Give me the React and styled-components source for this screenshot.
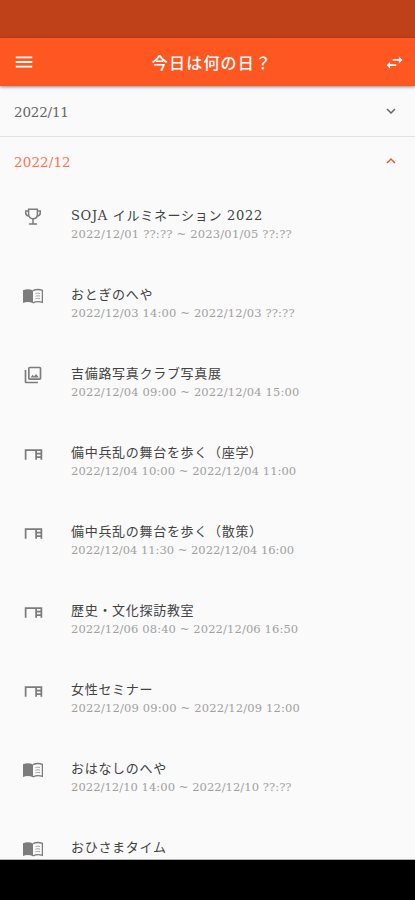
import React from 'react';
import styled, { createGlobalStyle } from 'styled-components';
import {
  MdMenu,
  MdSwapHoriz,
  MdOutlinePhotoLibrary,
  MdOutlineDesk,
  MdExpandMore,
  MdExpandLess,
} from 'react-icons/md';

const TrophyIcon = ({ size }) => (
  <svg
    width={size}
    height={size}
    viewBox="0 0 18 18"
    fill="none"
    stroke="currentColor"
    strokeWidth="1.5"
  >
    <path d="M4.6 1.2h8.8v5.1c0 2.7-1.8 4.5-4.4 4.5S4.6 9 4.6 6.3z" />
    <path d="M4.6 3.1H1.7v1.6c0 1.9 1.1 3.1 3.2 3.3M13.4 3.1h2.9v1.6c0 1.9-1.1 3.1-3.2 3.3" />
    <path d="M9 10.8v4.6M4.9 15.9h8.2" />
  </svg>
);

const BookIcon = ({ size }) => (
  <svg width={size} height={size} viewBox="0 0 20 20" fill="currentColor">
    <path d="M0 4.2C3.2 2.9 7 2.9 10 4.4v12.8c-3-1.5-6.8-1.5-10-.3z" />
    <path
      d="M10 4.7c2.7-1.4 6.3-1.5 9.4-.4v12c-3.1-1-6.7-.8-9.4.5"
      fill="none"
      stroke="currentColor"
      strokeWidth="1.3"
    />
    <path
      d="M12.4 7.7c1.4-.6 3-.6 4.6-.2M12.4 10.3c1.4-.6 3-.6 4.6-.2M12.4 12.9c1.4-.6 3-.6 4.6-.2"
      fill="none"
      stroke="currentColor"
      opacity="0.7"
    />
  </svg>
);

const ICONS = {
  festival: { Icon: TrophyIcon, size: 18 },
  book: { Icon: BookIcon, size: 20 },
  gallery: { Icon: MdOutlinePhotoLibrary, size: 20 },
  lecture: { Icon: MdOutlineDesk, size: 21 },
};

const EVENTS = [
  {
    type: 'festival',
    title: 'SOJA イルミネーション 2022',
    time: '2022/12/01 ??:?? ~ 2023/01/05 ??:??',
    tracking: 0.2,
  },
  {
    type: 'book',
    title: 'おとぎのへや',
    time: '2022/12/03 14:00 ~ 2022/12/03 ??:??',
    tracking: 0.15,
  },
  {
    type: 'gallery',
    title: '吉備路写真クラブ写真展',
    time: '2022/12/04 09:00 ~ 2022/12/04 15:00',
    tracking: 0.15,
  },
  {
    type: 'lecture',
    title: '備中兵乱の舞台を歩く（座学）',
    time: '2022/12/04 10:00 ~ 2022/12/04 11:00',
    tracking: 0.06,
  },
  {
    type: 'lecture',
    title: '備中兵乱の舞台を歩く（散策）',
    time: '2022/12/04 11:30 ~ 2022/12/04 16:00',
    tracking: 0,
  },
  {
    type: 'lecture',
    title: '歴史・文化探訪教室',
    time: '2022/12/06 08:40 ~ 2022/12/06 16:50',
    tracking: 0.12,
  },
  {
    type: 'lecture',
    title: '女性セミナー',
    time: '2022/12/09 09:00 ~ 2022/12/09 12:00',
    tracking: 0.17,
  },
  {
    type: 'book',
    title: 'おはなしのへや',
    time: '2022/12/10 14:00 ~ 2022/12/10 ??:??',
    tracking: 0.06,
  },
  {
    type: 'book',
    title: 'おひさまタイム',
  },
];

const Event = ({ type, title, time, tracking }) => {
  const { Icon, size } = ICONS[type];

  return (
    <EventRow>
      <EventIcon>
        <Icon size={size} />
      </EventIcon>
      <div>
        <EventTitle>{title}</EventTitle>
        {time && <EventTime $tracking={tracking}>{time}</EventTime>}
      </div>
    </EventRow>
  );
};

const App = () => (
  <Screen>
    <GlobalStyle />
    <StatusBar />
    <AppBar>
      <MdMenu size={22} />
      <Title>今日は何の日？</Title>
      <MdSwapHoriz size={21} />
    </AppBar>
    <Content>
      <MonthHeader $divided>
        2022/11
        <MdExpandMore size={18} />
      </MonthHeader>
      <MonthHeader $active>
        2022/12
        <MdExpandLess size={18} />
      </MonthHeader>
      {EVENTS.map(event => (
        <Event key={event.title} {...event} />
      ))}
    </Content>
    <NavigationBar />
  </Screen>
);

const GlobalStyle = createGlobalStyle`
  body {
    margin: 0;
    background: #000;
  }
`;

const Screen = styled.div`
  display: flex;
  flex-direction: column;
  width: 415px;
  height: 900px;
  overflow: hidden;
  background: #fafafa;
  font-family: 'DejaVu Serif', 'Noto Sans CJK JP', serif;
`;

const StatusBar = styled.div`
  flex: none;
  height: 38px;
  background: #bf411a;
`;

const AppBar = styled.header`
  position: relative;
  flex: none;
  display: flex;
  align-items: center;
  justify-content: space-between;
  box-sizing: border-box;
  height: 48px;
  padding: 0 10px 0 13px;
  background: #ff5722;
  color: #fff;
  box-shadow: 0 1px 3px rgba(0, 0, 0, 0.45);
`;

const Title = styled.h1`
  margin: 0 0 0 5px;
  font-family: 'Noto Sans CJK JP', sans-serif;
  font-size: 16px;
  font-weight: 500;
  letter-spacing: 1.2px;
`;

const Content = styled.main`
  flex: 1;
  min-height: 0;
  overflow: hidden;
  border-bottom: 1px solid #b0b0b0;
`;

const MonthHeader = styled.div`
  display: flex;
  align-items: center;
  justify-content: space-between;
  box-sizing: border-box;
  height: ${props => (props.$divided ? 51 : 50)}px;
  padding: ${props => (props.$divided ? '2px 15px 0 14px' : '0 15px 0 14px')};
  border-bottom: ${props => (props.$divided ? '1px solid #e2e2e2' : 'none')};
  color: ${props => (props.$active ? '#ff7350' : '#666')};
  font-size: 13.5px;
  letter-spacing: ${props => (props.$divided ? '-0.2px' : '0.1px')};

  svg {
    margin-bottom: 2px;
    color: ${props => (props.$active ? '#f2552c' : '#666')};
  }
`;

const EventRow = styled.div`
  display: flex;
  box-sizing: border-box;
  height: 79px;
  padding-top: 20px;
`;

const EventIcon = styled.div`
  display: flex;
  align-items: center;
  justify-content: center;
  width: 66px;
  height: 20px;
  margin-right: 5px;
  color: #7c7c7c;
`;

const EventTitle = styled.div`
  height: 18px;
  color: #424242;
  font-size: 13px;
  line-height: 18px;
  letter-spacing: 0.7px;
  white-space: nowrap;
`;

const EventTime = styled.div`
  height: 18px;
  color: #a0a0a0;
  font-size: 11.5px;
  line-height: 18px;
  letter-spacing: ${props => props.$tracking}px;
  white-space: nowrap;
`;

const NavigationBar = styled.div`
  flex: none;
  height: 40px;
  background: #000;
`;

export default App;
